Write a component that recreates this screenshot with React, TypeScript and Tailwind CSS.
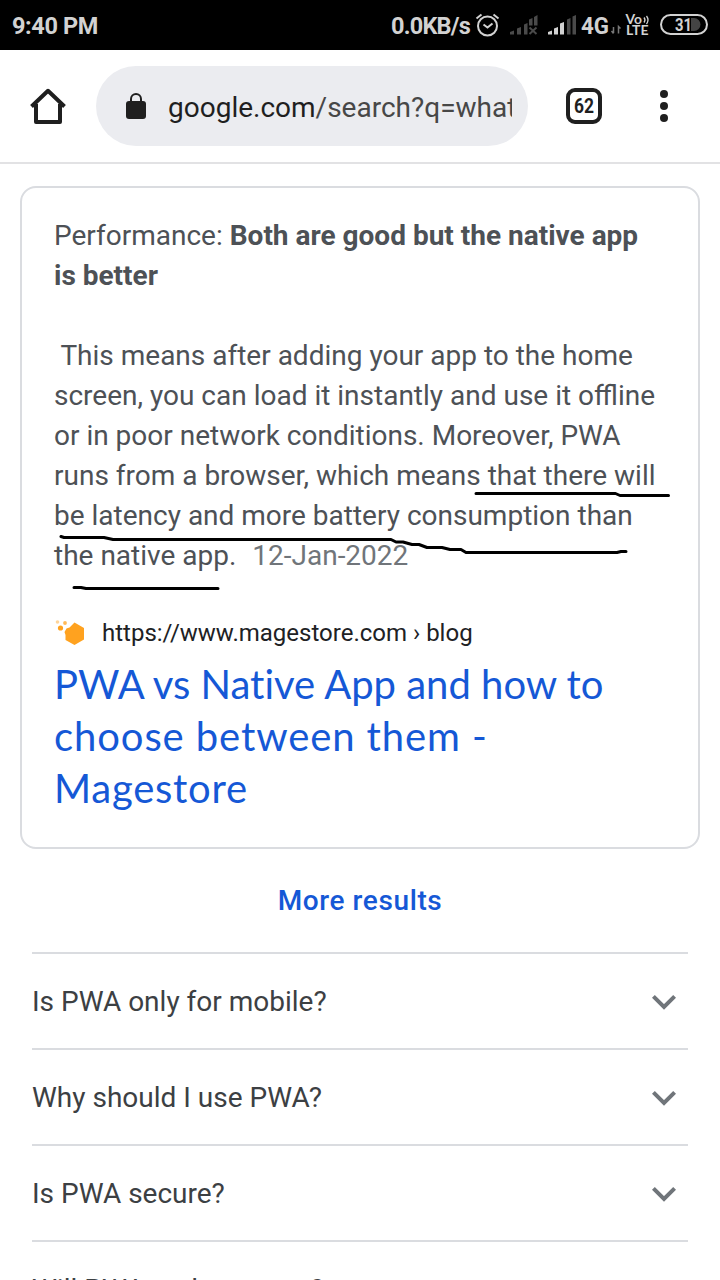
import React from "react";

const questions = ["Is PWA only for mobile?", "Why should I use PWA?", "Is PWA secure?", "Will PWA replace apps?"];

function StatusIcons() {
  return (
    <svg width="236" height="50" viewBox="0 0 236 50" className="shrink-0" fill="none">
      <g stroke="#d2d2d2" strokeWidth="2">
        <circle cx="14.500" cy="26" r="9.500" />
        <path d="M10.500 24.500l4 3 5-4" />
        <path d="M3.500 18.500l5-4M25.500 18.500l-5-4" />
      </g>
      <g fill="#4a4a4a">
        <path d="M37 34.5v-2.500l4-1.500v4zM44 34.500v-6l4-1.500v7.500zM51 34.500v-10l3.500-1.500v11.500zM56 25.500v-6l3.500-1.500v7.500zM61 25.500v-8.500l3.500-2v10.500z" />
      </g>
      <path d="M56.500 27.500l7 6.500M63.500 27.500l-7 6.500" stroke="#4a4a4a" strokeWidth="2" />
      <path d="M75 34.500v-2.500l4-1.500v4zM81 34.500v-6l4-1.500v7.500zM87 34.500v-11l4-1.500v12.500z" fill="#d2d2d2" />
      <path d="M94 34.500v-15l3.500-1.500v16.500zM99.500 34.500v-18l3.500-1.500v19.500z" fill="#4a4a4a" />
      <text x="108" y="34" fontFamily="Roboto, sans-serif" fontWeight="700" fontSize="23.500" fill="#d2d2d2" textLength="28" lengthAdjust="spacingAndGlyphs">4G</text>
      <path d="M140.500 27v6M138.500 31l2 2.500M145.500 33.500V26.500l2 2" stroke="#777" strokeWidth="1.500" />
      <text x="152.500" y="23.500" fontFamily="Lato, sans-serif" fontWeight="700" fontSize="12.500" fill="#d2d2d2" textLength="16.500" lengthAdjust="spacingAndGlyphs">Vo</text>
      <path d="M171 17.500q2 2.500 0 5M173.500 16q3 4 0 8" stroke="#d2d2d2" strokeWidth="1.300" />
      <text x="153" y="35" fontFamily="Lato, sans-serif" fontWeight="700" fontSize="12.500" fill="#d2d2d2" textLength="22.500" lengthAdjust="spacingAndGlyphs">LTE</text>
      <rect x="188" y="15" width="46" height="19" rx="9.500" stroke="#d2d2d2" strokeWidth="2" />
      <path d="M218 18h3a6.500 6.500 0 0 1 0 13h-3z" fill="#444" />
      <text x="202" y="31" fontFamily="Roboto, sans-serif" fontWeight="700" fontSize="18" fill="#d2d2d2" textLength="17" lengthAdjust="spacingAndGlyphs">31</text>
    </svg>
  );
}

function Marks() {
  return (
    <svg className="pointer-events-none absolute left-0 top-0" width="720" height="600" viewBox="0 0 720 600" fill="none" stroke="#000" strokeWidth="3" strokeLinecap="round" strokeLinejoin="round">
      <path d="M476 493.500H615.500l4.500 2H668.500" />
      <path d="M61 536.500l3 1H104l9 2H391l5 2.500h7l9 2.500h7l8 3h15l8 2h11l5 3H617l4-1h5" />
      <path d="M74 587.500h7l5 1H218" />
    </svg>
  );
}

export default function App() {
  return (
    <div className="relative h-[1280px] w-[720px] overflow-hidden bg-white font-['Roboto',sans-serif]">
      <header className="flex h-[50px] items-center bg-black text-[#d2d2d2]">
        <span className="ml-3 w-[379px] whitespace-nowrap pt-0.5 text-[23.5px] font-bold leading-[50px] tracking-[-0.4px]">9:40 PM</span>
        <span className="w-[82px] whitespace-nowrap pt-0.5 text-[23.5px] font-bold leading-[50px] tracking-[-0.8px]">0.0KB/s</span>
        <StatusIcons />
      </header>
      <div className="flex h-[114px] items-center border-b-2 border-[#e2e2e4]">
        <svg className="ml-7 shrink-0" width="40" height="40" viewBox="0 0 40 40" fill="none" stroke="#1f1f1f" strokeWidth="4">
          <path d="M3.500 20.500L20 4.800l16.500 15.700" strokeLinejoin="round" />
          <path d="M8 18v18h24V18" strokeLinejoin="round" />
        </svg>
        <div className="ml-7 flex h-20 w-[432px] items-center rounded-full bg-[#ebecf0]">
          <svg className="ml-[30px] shrink-0" width="20" height="28" viewBox="0 0 20 28">
            <rect y="9" width="20" height="18" rx="3" fill="#1f1f1f" />
            <path d="M5 10V7a5 5 0 0 1 10 0v3" fill="none" stroke="#1f1f1f" strokeWidth="2" />
          </svg>
          <div className="ml-[22px] w-[344px] overflow-hidden whitespace-nowrap pt-1 text-[28px] leading-10 text-[#474747]"><span className="text-[#1f1f1f]">google.com</span>/search?q=what</div>
        </div>
        <svg className="ml-[38px] shrink-0" width="36" height="36" viewBox="0 0 36 36">
          <rect x="2" y="2" width="32" height="32" rx="7" fill="none" stroke="#1f1f1f" strokeWidth="4" />
          <text x="8" y="25" fontFamily="Roboto, sans-serif" fontWeight="700" fontSize="20" fill="#1f1f1f" textLength="20" lengthAdjust="spacingAndGlyphs">62</text>
        </svg>
        <svg className="ml-[54px] shrink-0" width="16" height="40" viewBox="0 0 16 40" fill="#1f1f1f">
          <circle cx="8" cy="8" r="4" /><circle cx="8" cy="20" r="4" /><circle cx="8" cy="32" r="4" />
        </svg>
      </div>
      <section className="mx-5 mt-[22px] h-[663px] rounded-2xl border-2 border-[#dadce0] px-8 pt-7">
        <div className="whitespace-nowrap text-[28px] leading-10 text-[#4d5156]">
          <p>Performance: <b className="font-bold">Both are good but the native app</b></p>
          <p className="font-bold">is better</p>
          <p className="mt-10 whitespace-pre"> This means after adding your app to the home</p>
          <p>screen, you can load it instantly and use it offline</p>
          <p>or in poor network conditions. Moreover, PWA</p>
          <p>runs from a browser, which means that there will</p>
          <p>be latency and more battery consumption than</p>
          <p>the native app.<span className="ml-4 text-[#70757a]">12-Jan-2022</span></p>
        </div>
        <div className="mt-[37px] flex h-10 items-center">
          <svg width="32" height="32" viewBox="0 0 32 32" fill="#ffa21f">
            <path d="M20.500 5.500l9.500 5.500v11.500l-9.500 5.500-9-5v-5l-1-3 2-3.500 3-1z" />
            <circle cx="6.500" cy="11" r="2.600" /><circle cx="11" cy="6" r="1.900" opacity=".75" /><circle cx="3.500" cy="5" r="1.800" opacity=".45" />
          </svg>
          <span className="ml-4 whitespace-nowrap text-[24px] text-[#202124]">https://www.magestore.com › blog</span>
        </div>
        <h3 className="mt-[5px] whitespace-nowrap font-['Lato',sans-serif] text-[40px] leading-[52px] text-[#1558d6] [font-variant-ligatures:none]">
          <span className="block">PWA vs Native App and how to</span>
          <span className="block tracking-[0.9px]">choose between them -</span>
          <span className="block tracking-[0.75px]">Magestore</span>
        </h3>
      </section>
      <div className="flex h-[103px] items-center justify-center text-[28px] font-medium tracking-[0.6px] text-[#1558d6]">More results</div>
      <div className="mx-8 text-[28px] text-[#3c4043]">
        {questions.map((q) => (
          <div key={q} className="flex h-24 items-center justify-between border-t-2 border-[#dadce0] pr-3 pt-0.5">
            <span>{q}</span>
            <svg width="24" height="16" viewBox="0 0 24 16" fill="none" stroke="#70757a" strokeWidth="4"><path d="M1.400 2.400L12 13 22.600 2.400" /></svg>
          </div>
        ))}
      </div>
      <Marks />
    </div>
  );
}
